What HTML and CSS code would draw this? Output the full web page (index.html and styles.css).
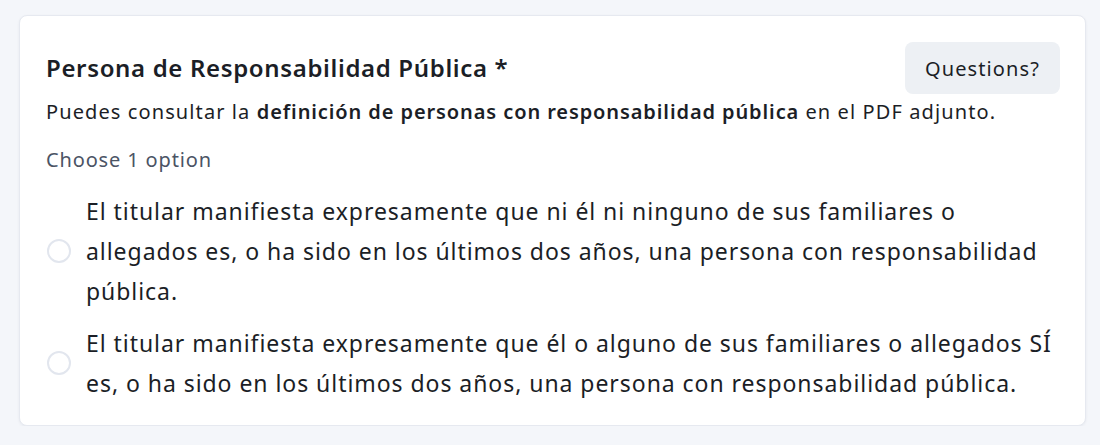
FILE: index.html
```html
<!DOCTYPE html>
<html lang="es">
<head>
<meta charset="utf-8">
<title>Persona de Responsabilidad Pública</title>
<link rel="stylesheet" href="styles.css">
</head>
<body>
<section class="card">
  <header class="card-header">
    <h2 class="title">Persona de Responsabilidad Pública *</h2>
    <button class="help-btn" type="button">Questions?</button>
  </header>
  <p class="desc">Puedes consultar la <strong>definición de personas con responsabilidad pública</strong> en el PDF adjunto.</p>
  <p class="hint">Choose 1 option</p>
  <div class="options">
    <label class="option">
      <span class="radio"></span>
      <span class="option-text">El titular manifiesta expresamente que ni él ni ninguno de sus familiares o allegados es, o ha sido en los últimos dos años, una persona con responsabilidad pública.</span>
    </label>
    <label class="option">
      <span class="radio"></span>
      <span class="option-text">El titular manifiesta expresamente que él o alguno de sus familiares o allegados SÍ es, o ha sido en los últimos dos años, una persona con responsabilidad pública.</span>
    </label>
  </div>
</section>
</body>
</html>
```
FILE: styles.css
```css
* { box-sizing: border-box; }
html, body { margin: 0; padding: 0; }
body {
  background: #f4f6fa;
  font-family: "Noto Sans", "Open Sans", sans-serif;
  color: #1b1e26;
  padding: 15px 14px 0 19px;
}
.card {
  width: 1067px;
  height: 411px;
  background: #ffffff;
  border: 1px solid #e6e9f0;
  border-radius: 8px;
  box-shadow: 0 1px 3px rgba(20, 30, 60, 0.06);
  padding: 26px 25px 0 26px;
}
.card-header {
  display: flex;
  justify-content: space-between;
  align-items: center;
  height: 52px;
}
.title {
  margin: 0;
  font-size: 24px;
  font-weight: 600;
  line-height: 30px;
  letter-spacing: 0.65px;
}
.help-btn {
  font-family: inherit;
  font-size: 20px;
  letter-spacing: 1.1px;
  color: #1b1e26;
  background: #edf0f4;
  border: none;
  border-radius: 8px;
  height: 52px;
  width: 155px;
  padding: 0;
}
.desc {
  margin: 4px 0 0;
  font-size: 20px;
  line-height: 28px;
  letter-spacing: 1.1px;
}
.desc strong { font-weight: 600; letter-spacing: 0.9px; }
.hint {
  margin: 20px 0 0;
  font-size: 20px;
  line-height: 28px;
  letter-spacing: 0.85px;
  color: #4b5465;
}
.options {
  display: flex;
  flex-direction: column;
  gap: 12px;
  margin-top: 17px;
}
.option {
  display: flex;
  align-items: center;
  gap: 15px;
  padding-left: 1px;
}
.radio {
  flex: none;
  width: 24px;
  height: 24px;
  border: 2px solid #e2e6ee;
  border-radius: 50%;
}
.option-text {
  font-size: 23px;
  line-height: 40px;
  letter-spacing: 0.95px;
  width: 972px;
}
```
